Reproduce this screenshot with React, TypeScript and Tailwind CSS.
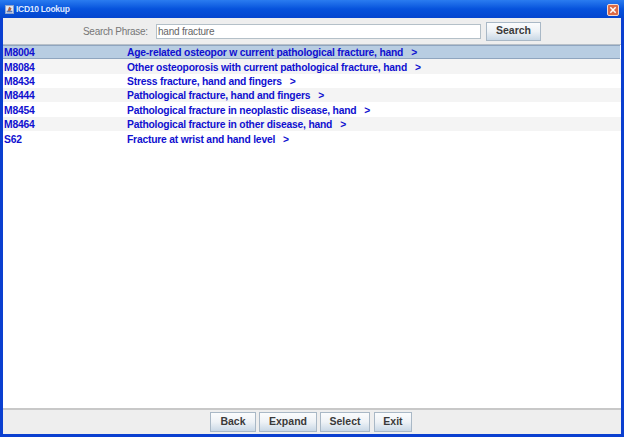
const rows = [
  ["M8004", "Age-related osteopor w current pathological fracture, hand"],
  ["M8084", "Other osteoporosis with current pathological fracture, hand"],
  ["M8434", "Stress fracture, hand and fingers"],
  ["M8444", "Pathological fracture, hand and fingers"],
  ["M8454", "Pathological fracture in neoplastic disease, hand"],
  ["M8464", "Pathological fracture in other disease, hand"],
  ["S62", "Fracture at wrist and hand level"],
];

function JavaButton({ label, width, height = "h-[20px]" }: { label: string; width: string; height?: string }) {
  return (
    <button
      className={`${width} ${height} flex items-center justify-center border border-[#a9b8c6] bg-gradient-to-b from-[#fbfcfd] via-[#eef2f6] to-[#c9d8e6] text-[10.5px] font-bold text-[#3a3a3a]`}
    >
      {label}
    </button>
  );
}

export default function App() {
  return (
    <div className="w-[624px] h-[437px] flex flex-col overflow-hidden bg-[#0a3fd0] font-['Liberation_Sans',Arial,sans-serif]">
      {/* title bar */}
      <div className="h-[18px] shrink-0 flex items-center justify-between pl-[5px] pr-[5px] bg-gradient-to-b from-[#2a7cf0] via-[#0652dc] to-[#0445cf]">
        <div className="flex items-center gap-[2px]">
          <svg width="9" height="9" viewBox="0 0 11 11">
            <rect x="0.5" y="0.5" width="10" height="10" fill="#dfe6f2" stroke="#8fa3c8" />
            <path d="M3 8 L5 2 L8 4 L6 9 Z" fill="#b5603a" />
            <rect x="2" y="7" width="7" height="2" fill="#5a77b5" />
          </svg>
          <span className="text-[8.5px] font-bold tracking-[-0.3px] text-[#dfe9ff]">ICD10 Lookup</span>
        </div>
        <div className="w-[12px] h-[12px] mt-[1px] flex items-center justify-center rounded-[2px] border border-[#f3d9d0] bg-[#dc6a46]">
          <svg width="8" height="8" viewBox="0 0 9 9">
            <path d="M1.5 1.5 L7.5 7.5 M7.5 1.5 L1.5 7.5" stroke="#fff" strokeWidth="1.7" />
          </svg>
        </div>
      </div>

      {/* window content */}
      <div className="flex-1 min-h-0 mx-[3px] mb-[3px] flex flex-col bg-[#eeeeee]">
        <div className="h-[27px] shrink-0 flex items-center pl-[80px] border-b border-[#b8c0c8]">
          <span className="w-[73px] whitespace-nowrap text-[10px] tracking-[-0.3px] text-[#777]">Search Phrase:</span>
          <div className="w-[325px] h-[15px] flex items-center pl-[1px] border border-[#b4c0c8] bg-white text-[10px] tracking-[-0.2px] text-[#666]">
            hand fracture
          </div>
          <div className="ml-[5px]">
            <JavaButton label="Search" width="w-[55px]" height="h-[19px]" />
          </div>
        </div>

        <div className="flex-1 min-h-0 bg-white">
          {rows.map(([code, name], i) => (
            <div
              key={code}
              className={`h-[14.35px] flex items-center pl-[1px] pt-[2px] text-[10.3px] tracking-[-0.2px] font-bold text-[#1010d0] whitespace-pre ${
                i === 0
                  ? "bg-[#b8cde2] border-y border-[#8fa5bf] w-[617px]"
                  : i % 2 === 1
                    ? "bg-[#f4f4f4]"
                    : "bg-white"
              }`}
            >
              <span className="w-[123px] shrink-0">{code}</span>
              <span>{name}{"   >"}</span>
            </div>
          ))}
        </div>

        <div className="h-[26px] shrink-0 flex items-center justify-center gap-[3px] pr-[2px] border-t-2 border-[#c8c8c8]">
          <JavaButton label="Back" width="w-[46px]" />
          <JavaButton label="Expand" width="w-[58px]" />
          <JavaButton label="Select" width="w-[50px]" />
          <div className="ml-[1px]">
            <JavaButton label="Exit" width="w-[38px]" />
          </div>
        </div>
      </div>
    </div>
  );
}
